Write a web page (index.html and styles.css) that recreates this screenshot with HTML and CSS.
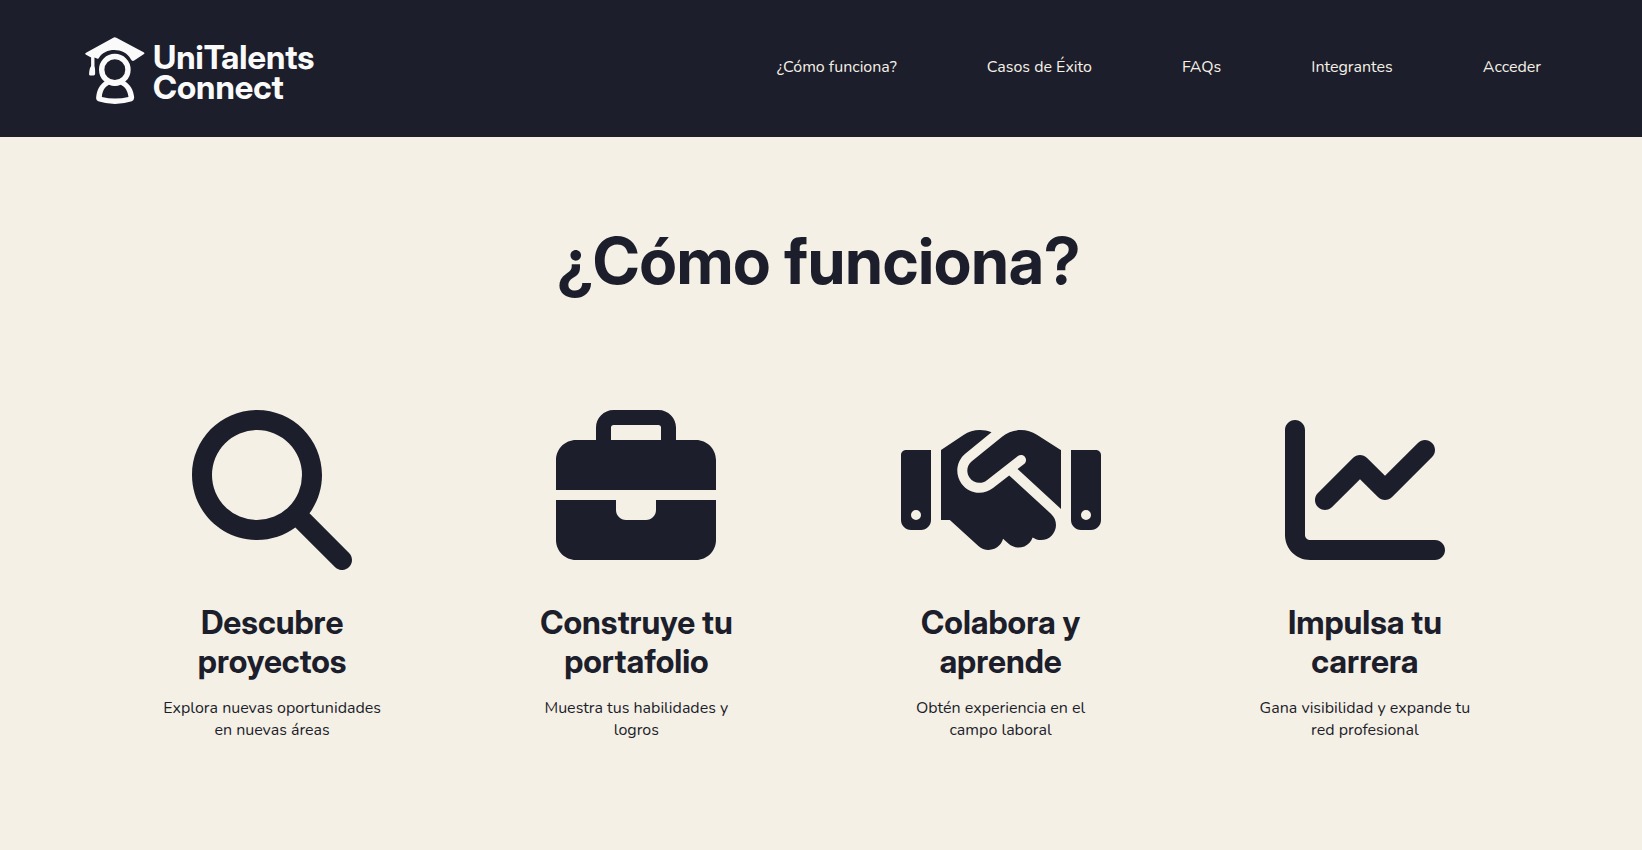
FILE: index.html
```html
<!DOCTYPE html>
<html lang="es">
<head>
<meta charset="utf-8">
<meta name="viewport" content="width=device-width, initial-scale=1">
<title>UniTalents Connect</title>
<link rel="stylesheet" href="styles.css">
</head>
<body>
<header class="header">
  <a class="logo" href="#">
    <svg class="logo-mark" viewBox="45 48 178 202" aria-hidden="true">
      <path fill="currentColor" d="M129 53Q133 50 138 53L219 96Q224 99 219 102L191 121Q185 125 181 117C163 81 105 81 87 112Q84 118 79 114L73 112V138Q75 141 75 161Q75 165 70 165H61Q56 165 57 160Q58 143 63 138V112L48 104Q43 101 48 98Z"/>
      <circle cx="133.500" cy="148" r="39" fill="none" stroke="currentColor" stroke-width="16"/>
      <path fill="currentColor" fill-rule="evenodd" d="M108 180Q134 196 159 180C178 190 189 207 191 231Q191 238 184 242Q134 258 84 242Q77 238 78 231C80 207 90 190 108 180ZM116 193C103 200 96 212 95 229Q134 239 174 229C172 212 165 200 151 193Q134 200 116 193Z"/>
    </svg>
    <span class="logo-name">UniTalents<br>Connect</span>
  </a>
  <nav class="nav" aria-label="Principal">
    <a href="#como-funciona">¿Cómo funciona?</a>
    <a href="#casos">Casos de Éxito</a>
    <a href="#faqs">FAQs</a>
    <a href="#integrantes">Integrantes</a>
    <a href="#acceder">Acceder</a>
  </nav>
</header>
<main class="how" id="como-funciona">
  <h1>¿Cómo funciona?</h1>
  <div class="steps">
    <section class="step">
      <svg class="icon" viewBox="0 0 512 512" aria-hidden="true"><path d="M416 208c0 45.9-14.9 88.300-40 122.700L502.600 457.400c12.500 12.500 12.500 32.800 0 45.300s-32.800 12.500-45.300 0L330.700 376c-34.400 25.200-76.800 40-122.700 40C93.100 416 0 322.900 0 208S93.100 0 208 0S416 93.100 416 208zM208 352a144 144 0 1 0 0-288 144 144 0 1 0 0 288z"/></svg>
      <h2>Descubre proyectos</h2>
      <p>Explora nuevas oportunidades en nuevas áreas</p>
    </section>
    <section class="step">
      <svg class="icon" viewBox="0 0 512 512" aria-hidden="true"><path d="M184 48H328c4.400 0 8 3.600 8 8V96H176V56c0-4.400 3.600-8 8-8zm-56 8V96H64C28.700 96 0 124.700 0 160v96H192 320 512V160c0-35.300-28.700-64-64-64H384V56c0-30.900-25.100-56-56-56H184c-30.900 0-56 25.100-56 56zM512 288H320v32c0 17.700-14.300 32-32 32H224c-17.700 0-32-14.300-32-32V288H0V416c0 35.300 28.700 64 64 64H448c35.300 0 64-28.700 64-64V288z"/></svg>
      <h2>Construye tu portafolio</h2>
      <p>Muestra tus habilidades y logros</p>
    </section>
    <section class="step">
      <svg class="icon" viewBox="0 0 640 512" aria-hidden="true"><path d="M323.4 85.2l-96.8 78.4c-16.1 13-19.2 36.4-7 53.1c12.9 17.8 38 21.3 55.3 7.8l99.3-77.2c7-5.4 17-4.2 22.5 2.8s4.2 17-2.8 22.5l-20.9 16.2L512 316.8V128h-.7l-3.9-2.5L434.8 79c-15.3-9.8-33.2-15-51.4-15c-21.8 0-43 7.5-60 21.2zm22.8 124.4l-51.7 40.2C263 274.3 217.3 268 193.700 235.6c-22.2-30.5-16.6-73.1 12.7-96.8l83.2-67.3c-11.6-4.9-24.1-7.4-36.8-7.4C234 64 215.700 69.6 200 80l-72 48V352h28.2l91.4 83.4c19.6 17.9 49.9 16.5 67.8-3.1c5.5-6.1 9.2-13.2 11.1-20.6l17 15.6c19.5 17.9 49.9 16.6 67.8-2.9c4.500-4.9 7.8-10.6 9.9-16.5c19.4 13 45.8 10.3 62.1-7.5c17.9-19.5 16.6-49.9-2.9-67.8l-134.2-123zM16 128c-8.8 0-16 7.2-16 16V352c0 17.7 14.3 32 32 32H64c17.7 0 32-14.3 32-32V128H16zM48 320a16 16 0 1 1 0 32 16 16 0 1 1 0-32zM544 128V352c0 17.7 14.3 32 32 32h32c17.7 0 32-14.3 32-32V144c0-8.8-7.2-16-16-16H544zm32 208a16 16 0 1 1 32 0 16 16 0 1 1 -32 0z"/></svg>
      <h2>Colabora y aprende</h2>
      <p>Obtén experiencia en el campo laboral</p>
    </section>
    <section class="step">
      <svg class="icon" viewBox="0 0 512 512" aria-hidden="true"><path d="M64 64c0-17.7-14.3-32-32-32S0 46.3 0 64V400c0 44.2 35.8 80 80 80H480c17.7 0 32-14.3 32-32s-14.3-32-32-32H80c-8.8 0-16-7.2-16-16V64zm406.6 86.6c12.5-12.5 12.5-32.8 0-45.3s-32.8-12.5-45.3 0L320 210.7l-57.4-57.4c-12.5-12.5-32.8-12.5-45.3 0l-112 112c-12.5 12.5-12.5 32.8 0 45.3s32.8 12.5 45.3 0L240 221.3l57.4 57.4c12.5 12.5 32.8 12.5 45.3 0l128-128z"/></svg>
      <h2>Impulsa tu carrera</h2>
      <p>Gana visibilidad y expande tu red profesional</p>
    </section>
  </div>
</main>
</body>
</html>
```

FILE: styles.css
```css
:root {
  --navy: #1c1e2b;
  --cream: #f5f0e6;
  --heading: "Inter Display", "Inter Tight", Inter, "Liberation Sans", sans-serif;
  --text: Nunito, Lato, "Open Sans", sans-serif;
}

* {
  box-sizing: border-box;
}

body {
  margin: 0;
  background: var(--cream);
  color: var(--navy);
  font-family: var(--text);
  font-size: 16px;
  line-height: 22px;
}

.header {
  display: flex;
  align-items: center;
  justify-content: space-between;
  gap: 32px;
  padding: 36px 101px 33px 85px;
  background: var(--navy);
}

.logo {
  display: flex;
  align-items: center;
  gap: 8px;
  color: #fafafa;
  text-decoration: none;
}

.logo-mark {
  width: 60px;
  height: 68px;
}

.logo-name {
  padding-top: 3px;
  font-family: var(--heading);
  font-size: 33px;
  font-weight: 700;
  line-height: 30px;
}

.nav {
  display: flex;
  flex-wrap: wrap;
  gap: 16px 90px;
  padding-bottom: 6px;
}

.nav a {
  color: var(--cream);
  text-decoration: none;
}

.how {
  padding: 85px 95px 84px 90px;
  text-align: center;
}

h1,
h2 {
  margin: 0;
  font-family: var(--heading);
  font-weight: 700;
}

h1 {
  font-size: 64px;
  line-height: 78px;
}

.steps {
  display: grid;
  grid-template-columns: repeat(auto-fit, minmax(240px, 1fr));
  margin-top: 110px;
}

.step {
  display: flex;
  flex-direction: column;
  align-items: center;
  padding: 0 72px;
}

.icon {
  height: 160px;
  fill: currentColor;
}

h2 {
  margin-top: 33px;
  font-size: 32px;
  line-height: 39px;
}

.step p {
  margin: 16px 0 0;
}
```
